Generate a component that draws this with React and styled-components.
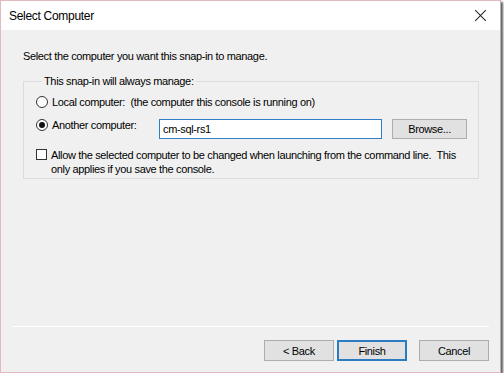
import React, { useState } from 'react';
import styled, { createGlobalStyle } from 'styled-components';

const GlobalStyle = createGlobalStyle`
  * { box-sizing: border-box; }
  body {
    margin: 0;
    background: #ffffff;
    font-family: "Liberation Sans", Arial, sans-serif;
    font-size: 11px;
    letter-spacing: -0.35px;
    color: #000;
  }
`;

const Window = styled.div`
  width: 501px;
  height: 373px;
  display: flex;
  flex-direction: column;
  border: 1px solid #e3b9c0;
  border-right-color: #b8b0b2;
  background: #f0f0f0;
  box-shadow: 2px 2px 2px rgba(40, 40, 40, 0.75);
`;

const TitleBar = styled.div`
  height: 29px;
  flex: none;
  display: flex;
  align-items: center;
  justify-content: space-between;
  background: #ffffff;
  padding: 0 14px 0 8px;
  font-size: 12px;
  letter-spacing: -0.3px;
`;

const Close = styled.div`
  width: 11px;
  height: 11px;
  position: relative;
  &::before, &::after {
    content: "";
    position: absolute;
    left: 5px;
    top: -2px;
    width: 1px;
    height: 15px;
    background: #222;
    transform: rotate(45deg);
  }
  &::after { transform: rotate(-45deg); }
`;

const Body = styled.div`
  flex: 1;
  padding: 19px 21px 0 22px;
  display: flex;
  flex-direction: column;
`;

const Intro = styled.div`
  line-height: 14px;
`;

const Group = styled.fieldset`
  margin: 11px 0 0 0;
  padding: 5px 0 0 12px;
  border: 1px solid #dcdcdc;
  border-radius: 0;
  height: 105px;
`;

const Legend = styled.legend`
  padding: 0 2px;
  margin-left: 6px;
  line-height: 14px;
`;

const Row = styled.div`
  display: flex;
  align-items: center;
  gap: 4px;
  height: ${p => p.h || 20}px;
  margin-bottom: ${p => p.mb || 0}px;
`;

const Radio = styled.span`
  width: 12px;
  height: 12px;
  flex: none;
  border: 1px solid #333;
  border-radius: 50%;
  background: #fff;
  display: flex;
  align-items: center;
  justify-content: center;
  &::after {
    content: "";
    width: 6px;
    height: 6px;
    border-radius: 50%;
    background: ${p => (p.checked ? '#111' : 'transparent')};
  }
`;

const Label = styled.span`
  white-space: pre;
  width: ${p => (p.w ? p.w + 'px' : 'auto')};
  flex: none;
`;

const TextBox = styled.input`
  width: 223px;
  height: 20px;
  margin-top: 7px;
  border: 1px solid #2f7fc8;
  padding: 0 3px;
  font-family: inherit;
  font-size: 11px;
  letter-spacing: -0.35px;
  background: #fff;
  outline: none;
`;

const Button = styled.button`
  width: ${p => p.w || 70}px;
  height: ${p => p.h || 20}px;
  margin-top: ${p => p.mt || 0}px;
  margin-left: ${p => p.ml || 0}px;
  border: 1px solid ${p => (p.primary ? '#2c7cc4' : '#adadad')};
  box-shadow: ${p => (p.primary ? 'inset 0 0 0 1px #2c7cc4' : 'none')};
  background: #e1e1e1;
  font-family: inherit;
  font-size: 11px;
  letter-spacing: -0.35px;
  color: #000;
  padding: 0;
`;

const CheckRow = styled.div`
  display: flex;
  align-items: flex-start;
  gap: 4px;
  margin-top: 14px;
`;

const Check = styled.span`
  width: 11px;
  height: 11px;
  flex: none;
  margin-top: 1px;
  border: 1px solid #333;
  background: #fff;
`;

const CheckText = styled.div`
  line-height: 14px;
  width: 410px;
`;

const Spacer = styled.div`
  flex: 1;
`;

const Separator = styled.div`
  height: 1px;
  margin: 0 -10px 0 -11px;
  background: #a0a0a0;
  border-bottom: 1px solid #fff;
`;

const Footer = styled.div`
  display: flex;
  justify-content: flex-end;
  align-items: center;
  gap: 3px;
  padding: 13px 0 11px 0;
  margin-right: -10px;
`;

export default function App() {
  const [name, setName] = useState('cm-sql-rs1');
  return (
    <>
      <GlobalStyle />
      <Window>
        <TitleBar>
          <span>Select Computer</span>
          <Close />
        </TitleBar>
        <Body>
          <Intro>Select the computer you want this snap-in to manage.</Intro>
          <Group>
            <Legend>This snap-in will always manage:</Legend>
            <Row h={18} mb={5}>
              <Radio />
              <Label>{'Local computer:  (the computer this console is running on)'}</Label>
            </Row>
            <Row h={18}>
              <Radio checked />
              <Label w={103}>Another computer:</Label>
              <TextBox value={name} onChange={e => setName(e.target.value)} />
              <Button w={75} mt={7} ml={6}>Browse...</Button>
            </Row>
            <CheckRow>
              <Check />
              <CheckText>
                Allow the selected computer to be changed when launching from the command line.&nbsp; This only applies if you save the console.
              </CheckText>
            </CheckRow>
          </Group>
          <Spacer />
          <Separator />
          <Footer>
            <Button h={21}>&lt; Back</Button>
            <Button h={21} primary>Finish</Button>
            <Button h={21} ml={9}>Cancel</Button>
          </Footer>
        </Body>
      </Window>
    </>
  );
}
